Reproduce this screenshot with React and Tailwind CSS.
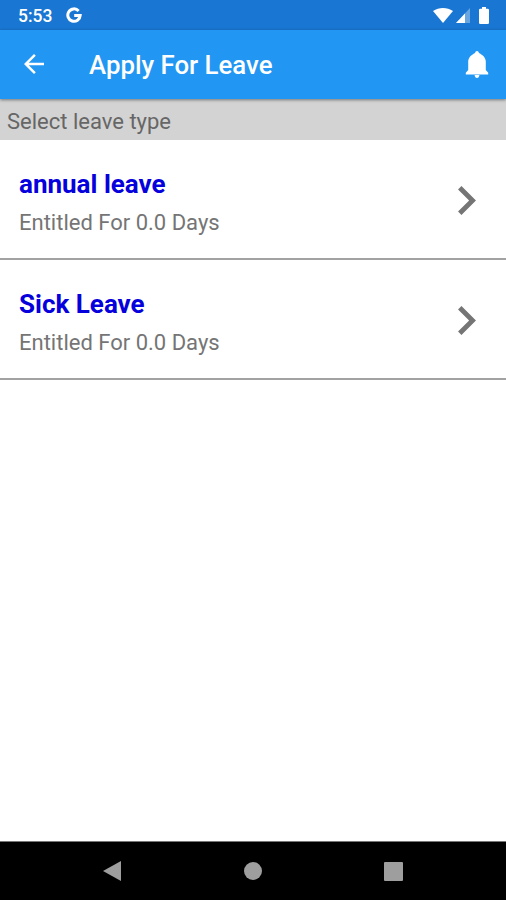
import React from 'react'

const leaveTypes = [
  { id: 1, name: 'annual leave', days: '0.0' },
  { id: 2, name: 'Sick Leave', days: '0.0' },
]

function StatusBar() {
  return (
    <div className="flex h-[30px] items-center justify-between bg-[#1976d2] pl-[18px] pr-[17px] text-white">
      <div className="flex items-center gap-[14px]">
        <span className="text-[17.5px] font-medium leading-[30px] pt-[2px]">5:53</span>
        <svg className="h-4 w-4" viewBox="0 0 16 16" fill="none" stroke="currentColor" strokeWidth="3">
          <path d="M12.6 3.9A6.2 6.2 0 1 0 14.2 8.4H8.2" />
        </svg>
      </div>
      <div className="flex items-center">
        <svg className="h-[15px] w-5" viewBox="0 0 20 15" fill="currentColor">
          <path d="M10 15 0 3C6-1 14-1 20 3Z" />
        </svg>
        <svg className="ml-[3px] h-[15px] w-[14px]" viewBox="0 0 14 15" fill="currentColor">
          <path d="M14 0V15H0Z" opacity="0.35" />
          <path d="M9 5.4V15H0Z" />
        </svg>
        <svg className="ml-[9px] h-[17px] w-[10px]" viewBox="0 0 10 17" fill="currentColor">
          <path d="M3 0h4v1.7h1.7A1.3 1.3 0 0 1 10 3v12.7A1.3 1.3 0 0 1 8.7 17H1.3A1.3 1.3 0 0 1 0 15.7V3a1.3 1.3 0 0 1 1.3-1.3H3Z" />
        </svg>
      </div>
    </div>
  )
}

function AppBar() {
  return (
    <header className="relative z-10 flex h-[69px] items-center bg-[#2196f3] pl-[19px] pr-[17px] text-white shadow-[0_1px_3px_rgba(0,0,0,0.45)]">
      <svg className="-mt-px h-[30px] w-[30px]" viewBox="0 0 24 24" fill="currentColor">
        <path d="M20 11H7.83l5.59-5.59L12 4l-8 8 8 8 1.41-1.41L7.83 13H20v-2z" />
      </svg>
      <h1 className="ml-10 flex-1 pt-px text-[25.8px] font-medium leading-8">Apply For Leave</h1>
      <svg className="h-[27px] w-6" viewBox="0 0 24 27" fill="currentColor">
        <path d="M12 0c-1 0-1.7.8-2 2C6.2 4 3.2 6.800 3.200 10.500V19L.8 21.700V23.500h22.400v-1.800L20.800 19v-8.500C20.800 6.800 17.800 4 14 2c-.3-1.200-1-2-2-2Z" />
        <path d="M9.600 24h4.800c-.2 1.800-1 3-2.400 3s-2.200-1.200-2.400-3Z" />
      </svg>
    </header>
  )
}

function LeaveRow({ name, days }) {
  return (
    <li className="flex h-[120px] items-center justify-between border-b-2 border-[#a2a2a2] pl-[19px] pr-[30px]">
      <div className="pt-[11px]">
        <h2 className="text-[26px] font-bold leading-[37px] text-[#0500dc]">{name}</h2>
        <p className="text-[22px] leading-10 text-[#757575]">Entitled For {days} Days</p>
      </div>
      <svg className="mt-[2px] h-[29px] w-[18px]" viewBox="8.59 6 7.41 12" fill="#757575">
        <path d="M10 6 8.59 7.41 13.17 12l-4.58 4.59L10 18l6-6z" />
      </svg>
    </li>
  )
}

function NavBar() {
  return (
    <nav className="flex h-[59px] items-center border-t border-[#777] bg-black pl-[103px] text-[#9e9e9e]">
      <svg className="h-5 w-[18px]" viewBox="0 0 18 20" fill="currentColor">
        <path d="M18 0V20L0 10Z" />
      </svg>
      <div className="ml-[123px] h-[18px] w-[18px] rounded-full bg-[#9e9e9e]"></div>
      <div className="ml-[122px] h-[19px] w-[19px] rounded-[1px] bg-[#9e9e9e]"></div>
    </nav>
  )
}

function App() {
  return (
    <div className="flex h-screen w-full flex-col overflow-hidden bg-white font-['Roboto',sans-serif]">
      <StatusBar />
      <AppBar />
      <div className="h-[41px] bg-[#d3d3d3] pl-[7px] text-[22px] leading-[45px] text-[#666]">
        Select leave type
      </div>
      <ul className="flex-1">
        {leaveTypes.map((leave) => (
          <LeaveRow key={leave.id} name={leave.name} days={leave.days} />
        ))}
      </ul>
      <NavBar />
    </div>
  )
}

export default App
